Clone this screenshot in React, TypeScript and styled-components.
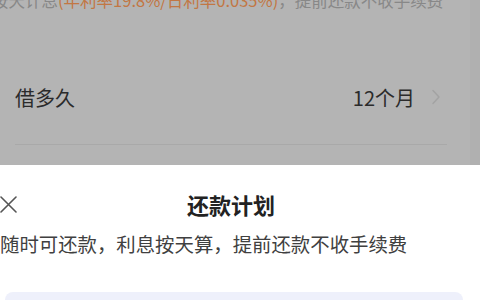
import React from 'react';
import styled, { createGlobalStyle } from 'styled-components';

const GlobalStyle = createGlobalStyle`
  html, body {
    margin: 0;
    padding: 0;
    width: 480px;
    height: 300px;
    overflow: hidden;
    background: #ffffff;
    font-family: 'Noto Sans CJK SC', 'Noto Sans', sans-serif;
  }
`;

const Page = styled.div`
  width: 480px;
  height: 300px;
  display: flex;
  flex-direction: column;
  overflow: hidden;
`;

// dimmed page behind the sheet
const Backdrop = styled.div`
  height: 165px;
  flex-shrink: 0;
  background: #b0b0b0;
  overflow: hidden;
`;

const Card = styled.div`
  width: 470px;
  height: 100%;
  background: #b4b4b4;
  display: flex;
  flex-direction: column;
`;

const Note = styled.div`
  margin-top: -10px;
  margin-left: -8px;
  height: 20px;
  line-height: 20px;
  font-size: 16.5px;
  color: #888888;
  white-space: nowrap;
`;

const Rate = styled.span`
  color: #c27744;
`;

const Row = styled.div`
  margin-top: 49px;
  height: 76px;
  padding: 0 29px 0 15px;
  display: flex;
  align-items: center;
  justify-content: space-between;
  font-size: 20px;
  color: #2b2b2b;
`;

const Value = styled.div`
  display: flex;
  align-items: center;
  gap: 16px;
`;

const Divider = styled.div`
  margin: 9px 23px 0 15px;
  height: 1px;
  background: #a9a9a9;
`;

const Sheet = styled.div`
  flex: 1;
  background: #ffffff;
  display: flex;
  flex-direction: column;
`;

const Header = styled.div`
  margin-top: 19px;
  height: 40px;
  padding-right: 18px;
  display: grid;
  grid-template-columns: 17px 1fr 17px;
  align-items: center;
`;

const Title = styled.div`
  text-align: center;
  font-size: 22px;
  font-weight: 700;
  color: #222222;
  line-height: 40px;
`;

const Hint = styled.div`
  margin-top: 7px;
  line-height: 26px;
  font-size: 19.4px;
  color: #404040;
  white-space: nowrap;
`;

const PlanBox = styled.div`
  margin: 35px 17px 0 5px;
  height: 60px;
  border-radius: 8px;
  background: #eef0fb;
`;

const Chevron = () => (
  <svg width="10" height="16" viewBox="0 0 10 16" fill="none">
    <path d="M2 1.5 L8 8 L2 14.5" stroke="#a3a3a3" strokeWidth="1.5" strokeLinecap="round" strokeLinejoin="round" />
  </svg>
);

const CloseIcon = () => (
  <svg width="17" height="17" viewBox="0 0 17 17" fill="none">
    <path d="M1 1 L16 16 M16 1 L1 16" stroke="#555555" strokeWidth="1.6" strokeLinecap="round" />
  </svg>
);

export default function App() {
  return (
    <Page>
      <GlobalStyle />
      <Backdrop>
        <Card>
          <Note>
            按天计息<Rate>(年利率19.8%/日利率0.035%)</Rate>，提前还款不收手续费
          </Note>
          <Row>
            <span>借多久</span>
            <Value>
              <span>12个月</span>
              <Chevron />
            </Value>
          </Row>
          <Divider />
        </Card>
      </Backdrop>
      <Sheet>
        <Header>
          <CloseIcon />
          <Title>还款计划</Title>
          <span />
        </Header>
        <Hint>随时可还款，利息按天算，提前还款不收手续费</Hint>
        <PlanBox />
      </Sheet>
    </Page>
  );
}
